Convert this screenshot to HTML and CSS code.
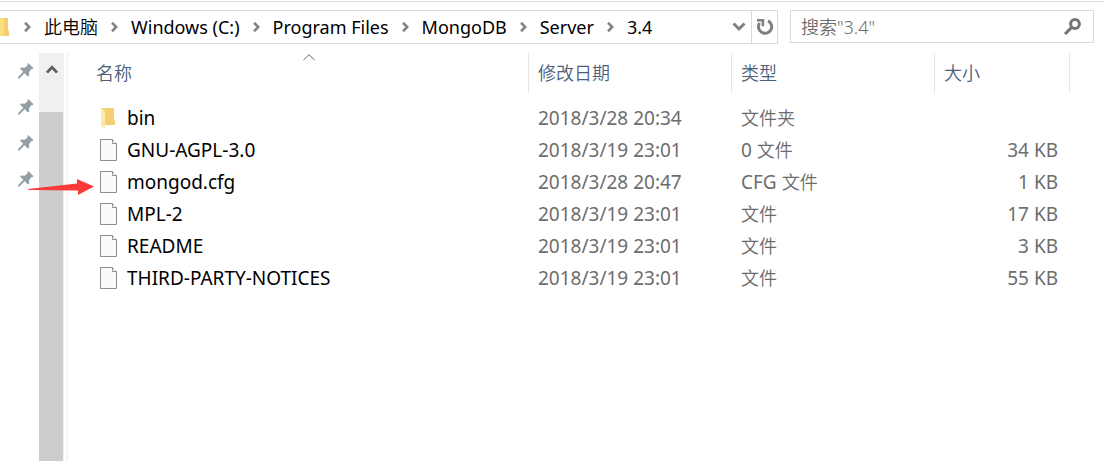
FILE: index.html
```
<!DOCTYPE html>
<html lang="zh-CN">
<head>
<meta charset="utf-8">
<title>3.4</title>
<link rel="stylesheet" href="styles.css">
</head>
<body>
<svg class="defs" aria-hidden="true">
  <symbol id="chevron" viewBox="0 0 8 12"><path d="M1.2 1.2 6 6 1.2 10.8" fill="none" stroke="#858585" stroke-width="3"/></symbol>
  <symbol id="pin" viewBox="0 0 16 16"><path d="M10.2 0 15.6 5.2 14.4 6.2 13.4 6 11 9.2 11.2 12.4 10 13.4 6.6 10.2 1.4 15.4 0 15.4.2 14 5.2 8.8 2 5.6 3 4.4 6.6 4.8 9.8 2.2 9.4 1Z" fill="#929fa6"/></symbol>
  <symbol id="file" viewBox="0 0 18 22"><path d="M.5.5H12.5L16.5 4.5V21.5H.5Z" fill="#f7f9fa" stroke="#8c8c8c"/><path d="M12.5.5V4.5H16.5" fill="#fff" stroke="#8c8c8c"/></symbol>
  <symbol id="folder" viewBox="0 0 18 22"><path d="M1 1H14V12L15 13V18H5L1 16Z" fill="#f5d073"/><path d="M1 1 5 4V22L1 19Z" fill="#ffe9a6"/></symbol>
</svg>
<header class="toolbar">
  <div class="address">
    <svg class="drive" viewBox="0 0 9 18"><path d="M0 0H8V12L9 13V18H0Z" fill="#fbdc7c"/><path d="M4 0H8V12L9 13V18H4Z" fill="#f3ce70"/></svg>
    <nav class="crumbs" aria-label="地址">
      <svg class="sep"><use href="#chevron"/></svg><a class="cjk" href="#">此电脑</a>
      <svg class="sep"><use href="#chevron"/></svg><a href="#">Windows (C:)</a>
      <svg class="sep"><use href="#chevron"/></svg><a href="#">Program Files</a>
      <svg class="sep"><use href="#chevron"/></svg><a href="#">MongoDB</a>
      <svg class="sep"><use href="#chevron"/></svg><a href="#">Server</a>
      <svg class="sep"><use href="#chevron"/></svg><a href="#">3.4</a>
    </nav>
    <button class="history" aria-label="历史记录"><svg width="14" height="10" viewBox="0 0 14 10"><path d="M1.5 1.5 7 7 12.5 1.5" fill="none" stroke="#808080" stroke-width="3"/></svg></button>
    <button class="refresh" aria-label="刷新"><svg width="18" height="18" viewBox="0 0 18 18"><path d="M12 2.8A6.6 6.6 0 1 1 3.6 5" fill="none" stroke="#808080" stroke-width="3"/><path d="M1 1H8.2V8.2H5.6V3.6H1Z" fill="#808080"/></svg></button>
  </div>
  <div class="search">
    <input type="search" aria-label="搜索" placeholder='搜索"3.4"'>
    <button aria-label="开始搜索"><svg width="17" height="17" viewBox="0 0 17 17"><circle cx="11" cy="6" r="4.4" fill="none" stroke="#757575" stroke-width="3"/><path d="M7.6 9.4 1 16" stroke="#757575" stroke-width="3"/></svg></button>
  </div>
</header>
<main class="body">
  <aside class="pins">
    <svg><use href="#pin"/></svg><svg><use href="#pin"/></svg><svg><use href="#pin"/></svg><svg><use href="#pin"/></svg>
  </aside>
  <div class="scrollbar">
    <button aria-label="向上滚动"><svg width="12" height="9" viewBox="0 0 12 9"><path d="M1 7.6 6 2.3 11 7.6" fill="none" stroke="#606060" stroke-width="2.8"/></svg></button>
    <div class="thumb"></div>
  </div>
  <section class="files">
    <table>
      <colgroup><col><col class="c-date"><col class="c-type"><col class="c-size"></colgroup>
      <thead>
        <tr>
          <th aria-sort="ascending">名称<svg class="sort" width="12" height="7" viewBox="0 0 12 7"><path d="M.5 6 6 .7 11.5 6" fill="none" stroke="#666"/></svg></th>
          <th>修改日期</th><th>类型</th><th>大小</th>
        </tr>
      </thead>
      <tbody>
        <tr><td><div class="name"><svg><use href="#folder"/></svg>bin</div></td><td>2018/3/28 20:34</td><td><span class="cjk">文件夹</span></td><td></td></tr>
        <tr><td><div class="name"><svg><use href="#file"/></svg>GNU-AGPL-3.0</div></td><td>2018/3/19 23:01</td><td>0 <span class="cjk">文件</span></td><td>34 KB</td></tr>
        <tr><td><div class="name"><svg><use href="#file"/></svg>mongod.cfg<svg class="arrow" viewBox="0 0 66 16"><path d="M0 10 49 4.6V0L66 7.5 50 16V11.4L1 11Z" fill="#fb3b3a"/></svg></div></td><td>2018/3/28 20:47</td><td>CFG <span class="cjk">文件</span></td><td>1 KB</td></tr>
        <tr><td><div class="name"><svg><use href="#file"/></svg>MPL-2</div></td><td>2018/3/19 23:01</td><td><span class="cjk">文件</span></td><td>17 KB</td></tr>
        <tr><td><div class="name"><svg><use href="#file"/></svg>README</div></td><td>2018/3/19 23:01</td><td><span class="cjk">文件</span></td><td>3 KB</td></tr>
        <tr><td><div class="name"><svg><use href="#file"/></svg>THIRD-PARTY-NOTICES</div></td><td>2018/3/19 23:01</td><td><span class="cjk">文件</span></td><td>55 KB</td></tr>
      </tbody>
    </table>
  </section>
</main>
</body>
</html>
```
FILE: styles.css
```
* { box-sizing: border-box; }
body {
  margin: 0;
  min-height: 100vh;
  display: flex;
  flex-direction: column;
  background: #fff;
  color: #000;
  font: 19px/32px "Noto Sans", "Noto Sans CJK SC", sans-serif;
}
button { border: 0; padding: 0; background: none; display: flex; align-items: center; justify-content: center; }
svg { display: block; flex: none; }
.defs { position: absolute; width: 0; height: 0; }
.cjk { font-size: 18px; font-weight: 350; }

.toolbar {
  display: flex;
  gap: 12px;
  margin-top: 1px;
  padding: 8px 10px 9px 0;
  border-top: 1px solid #d9d9d9;
}
.address { flex: 1; display: flex; align-items: center; height: 34px; border: 1px solid #d9d9d9; border-left: 0; }
.drive { width: 9px; height: 18px; }
.crumbs { flex: 1; display: flex; align-items: center; gap: 13px; padding-left: 15px; font-size: 18px; }
.crumbs a { color: #000; text-decoration: none; white-space: nowrap; }
.sep { width: 7px; height: 12px; }
.history { width: 24px; height: 32px; }
.refresh { width: 26px; height: 32px; border-left: 1px solid #d9d9d9; }
.search { width: 304px; height: 33px; display: flex; align-items: center; border: 1px solid #d9d9d9; }
.search input {
  flex: 1;
  min-width: 0;
  border: 0;
  outline: 0;
  padding: 0 0 0 10px;
  background: none;
  font: 350 18px/30px "Noto Sans", "Noto Sans CJK SC", sans-serif;
}
.search input::placeholder { color: #6d6d6d; opacity: 1; }
.search button { width: 42px; height: 31px; }

.body { flex: 1; display: flex; }
.pins { width: 39px; padding: 10px 5px 0 0; display: flex; flex-direction: column; align-items: flex-end; gap: 20px; }
.pins svg { width: 16px; height: 16px; }
.scrollbar { width: 25px; background: #f0f0f0; display: flex; flex-direction: column; }
.scrollbar button { height: 32px; }
.thumb { flex: 1; margin: 27px 1px 0 0; background: #cdcdcd; }
.files { flex: 1; margin-left: 2px; padding-right: 34px; border-left: 2px solid #f5f5f5; }

table { width: 100%; table-layout: fixed; border-collapse: separate; border-spacing: 0; }
.c-date, .c-type { width: 203px; }
.c-size { width: 135px; }
th {
  position: relative;
  height: 40px;
  padding: 0 9px;
  border-right: 1px solid #e5e5e5;
  color: #4c607a;
  font-size: 18px;
  font-weight: 350;
  text-align: left;
}
th:first-child { padding-left: 28px; }
.sort { position: absolute; top: 1px; left: 51%; }
tbody::before { content: ""; display: block; height: 9px; }
td { height: 32px; padding: 0 9px; color: #6d6d6d; white-space: nowrap; }
td:first-child { padding-left: 32px; color: #000; }
td:last-child { padding-right: 12px; text-align: right; }
.name { position: relative; display: flex; align-items: center; gap: 9px; }
.name svg { width: 18px; height: 22px; }
.name .arrow { position: absolute; left: -72px; top: 13px; width: 66px; height: 16px; }
```
